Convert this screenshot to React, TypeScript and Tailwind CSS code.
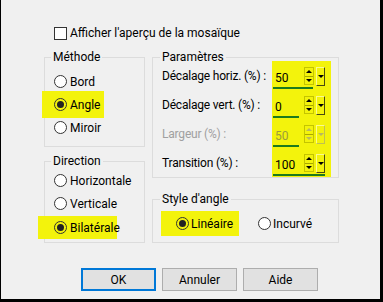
import React from 'react';

const HL = 'bg-[#f3f30c]';

const Radio: React.FC<{ checked?: boolean; hl?: boolean }> = ({ checked, hl }) => (
  <span
    className={`flex h-[13px] w-[13px] shrink-0 items-center justify-center rounded-full border border-[#333] ${
      hl ? 'bg-[#f3f30c]' : 'bg-white'
    }`}
  >
    {checked && <span className="h-[7px] w-[7px] rounded-full bg-[#222]" />}
  </span>
);

const Up: React.FC<{ off?: boolean }> = ({ off }) => (
  <span
    className={`h-0 w-0 border-x-[3px] border-b-[3px] border-x-transparent ${off ? 'border-b-[#b8b860]' : 'border-b-black'}`}
  />
);

const Down: React.FC<{ off?: boolean }> = ({ off }) => (
  <span
    className={`h-0 w-0 border-x-[3px] border-t-[3px] border-x-transparent ${off ? 'border-t-[#b8b860]' : 'border-t-black'}`}
  />
);

const Spinner: React.FC<{ value: string; line: string; off?: boolean }> = ({ value, line, off }) => (
  <div className="flex h-[29px] flex-col pt-[6px]">
    <div className="flex h-[19px] items-start">
      <span className={`ml-[3px] w-[29px] self-end ${off ? 'text-[#9c9c3c]' : 'text-black'}`}>{value}</span>
      {/* up / down */}
      <div className="flex h-[18px] w-[10px] flex-col border border-[#c4c400]">
        <span className="flex flex-1 items-center justify-center border-b border-[#a8a800]">
          <Up off={off} />
        </span>
        <span className="flex flex-1 items-center justify-center">
          <Down off={off} />
        </span>
      </div>
      {/* dropdown */}
      <div
        className={`ml-[2px] flex h-[19px] w-[9px] items-center justify-center border-l border-t border-[#fafa90] ${
          off ? 'border-b border-r border-b-[#c0c050] border-r-[#c0c050]' : 'border-b border-r border-b-[#4a4a10] border-r-[#4a4a10]'
        }`}
      >
        <Down off={off} />
      </div>
    </div>
    <div className={`ml-[1px] mt-[1px] h-[2px] bg-[#1d7a1d] ${line}`} />
  </div>
);

const Group: React.FC<{ title: string; className?: string; legendClass?: string; children: React.ReactNode }> = ({
  title,
  className,
  legendClass,
  children,
}) => (
  <fieldset className={`border border-[#dcdcdc] ${className ?? ''}`}>
    <legend className={`px-[2px] leading-[16px] ${legendClass ?? 'ml-[6px]'}`}>{title}</legend>
    {children}
  </fieldset>
);

const Button: React.FC<{ label: string; primary?: boolean }> = ({ label, primary }) => (
  <button
    className={`flex h-[23px] w-[75px] items-center justify-center bg-[#e1e1e1] ${
      primary ? 'border-2 border-[#0078d7]' : 'border border-[#adadad]'
    }`}
  >
    {label}
  </button>
);

export default function App() {
  return (
    <div className="h-[302px] w-[383px] whitespace-nowrap border-b-[3px] border-l border-r-[3px] border-black bg-[#f0f0f0] pt-[25px] font-['Roboto',sans-serif] text-[12px] leading-[16px] text-black">
      {/* Checkbox */}
      <div className="ml-[53px] flex h-[16px] items-center gap-[3px]">
        <span className="h-[13px] w-[13px] border border-[#333] bg-white" />
        <span>Afficher l'aperçu de la mosaïque</span>
      </div>

      <div className="ml-[43px] mt-[8px] flex gap-[7px]">
        {/* Left column */}
        <div className="flex w-[101px] flex-col">
          <Group title="Méthode" className="pb-[7px] pt-[5px]">
            <div className="ml-[9px] flex h-[23px] items-center gap-[3px]">
              <Radio />
              <span>Bord</span>
            </div>
            <div className={`-ml-[3px] -my-[2px] flex h-[27px] w-[62px] items-center gap-[3px] pl-[12px] ${HL}`}>
              <Radio checked hl />
              <span>Angle</span>
            </div>
            <div className="ml-[9px] flex h-[23px] items-center gap-[3px]">
              <Radio />
              <span>Miroir</span>
            </div>
          </Group>

          <Group title="Direction" className="mt-[6px] pb-[4px]">
            <div className="ml-[9px] flex h-[23px] items-center gap-[3px]">
              <Radio />
              <span>Horizontale</span>
            </div>
            <div className="ml-[9px] flex h-[23px] items-center gap-[3px]">
              <Radio />
              <span>Verticale</span>
            </div>
            <div className={`-ml-[7px] flex h-[23px] w-[79px] translate-y-[1px] items-center gap-[3px] pl-[16px] ${HL}`}>
              <Radio checked hl />
              <span>Bilatérale</span>
            </div>
          </Group>
        </div>

        {/* Right column */}
        <div className="flex w-[187px] flex-col">
          <Group title="Paramètres" legendClass="ml-[7px]">
            <div className="-mt-[4px] flex">
              <div className="flex w-[119px] flex-col pl-[9px] tracking-[-0.2px]">
                <span className="flex h-[29px] items-center">Décalage horiz. (%) :</span>
                <span className="flex h-[29px] items-center">Décalage vert. (%) :</span>
                <span className="flex h-[29px] items-center text-[#a0a0a0]">Largeur (%) :</span>
                <span className="flex h-[29px] items-center">Transition (%) :</span>
              </div>
              <div className={`flex w-[59px] flex-col ${HL}`}>
                <Spinner value="50" line="w-[40px]" />
                <Spinner value="0" line="w-[26px]" />
                <Spinner value="50" line="w-[26px]" off />
                <Spinner value="100" line="w-[52px]" />
              </div>
            </div>
          </Group>

          <Group title="Style d'angle" legendClass="ml-[7px]" className="mt-[13px] pb-[6px] pt-[4px]">
            <div className="flex items-center">
              <div className={`ml-[8px] flex h-[25px] w-[78px] items-center gap-[2px] pl-[15px] ${HL}`}>
                <Radio checked hl />
                <span>Linéaire</span>
              </div>
              <div className="ml-[19px] flex items-center gap-[2px]">
                <Radio />
                <span>Incurvé</span>
              </div>
            </div>
          </Group>
        </div>
      </div>

      {/* Buttons */}
      <div className="ml-[80px] mt-[25px] flex gap-[6px]">
        <Button label="OK" primary />
        <Button label="Annuler" />
        <Button label="Aide" />
      </div>
    </div>
  );
}
